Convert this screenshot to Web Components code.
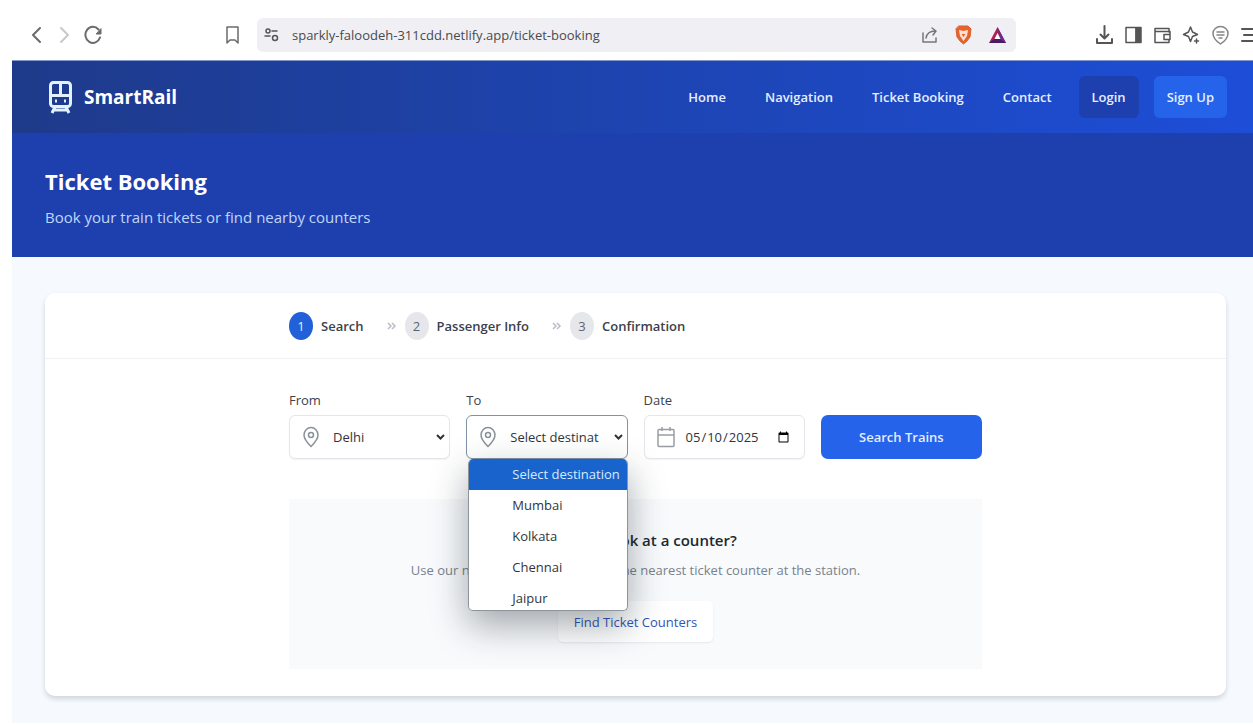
<!DOCTYPE html>
<html lang="en">
<head>
<meta charset="utf-8">
<meta name="viewport" content="width=device-width, initial-scale=1">
<title>SmartRail – Ticket Booking</title>
<style>
  body { margin: 0; background: #fff; color: #1f2937; font: 13px/20px "Open Sans", "Noto Sans", sans-serif; }
  main { display: block; margin-left: 12px; border-top: 1px solid #8497cc; background: #f6faff; }
</style>
</head>
<body>
<browser-bar></browser-bar>
<main>
  <site-header></site-header>
  <page-hero>
    <span slot="title">Ticket Booking</span>
    <span slot="lead">Book your train tickets or find nearby counters</span>
  </page-hero>
  <booking-card>
    <step-item slot="steps" number="1" current>Search</step-item>
    <step-item slot="steps" number="2">Passenger Info</step-item>
    <step-item slot="steps" number="3">Confirmation</step-item>
    <booking-form></booking-form>
    <counter-callout>
      <span slot="title">Prefer to book at a counter?</span>
      <span slot="text">Use our navigation system to find the nearest ticket counter at the station.</span>
      <span slot="action">Find Ticket Counters</span>
    </counter-callout>
  </booking-card>
</main>

<script>
const define = (name, html, setup) => customElements.define(name, class extends HTMLElement {
  connectedCallback() {
    if (this.shadowRoot) return;
    const t = document.createElement('template');
    t.innerHTML = '<style>:host,*{box-sizing:border-box}</style>' + html;
    this.attachShadow({ mode: 'open' }).append(t.content.cloneNode(true));
    if (setup) setup(this, this.shadowRoot);
  }
});

define('browser-bar', `
<style>
  :host { display: flex; align-items: center; height: 60px; padding: 18px 0 8px 26px; overflow: hidden; color: #6b6b6b; }
  button { flex: none; padding: 0; border: 0; background: none; color: inherit; display: grid; place-items: center; }
  svg { display: block; flex: none; fill: none; stroke: currentColor; stroke-width: 2; stroke-linecap: round; stroke-linejoin: round; }
  .nav { display: flex; gap: 10px; flex: none; width: 197px; }
  .nav button { width: 19px; height: 24px; }
  .dim { color: #c9c9c9; }
  .address { flex: 1; display: flex; align-items: center; gap: 15px; height: 34px; margin-left: 14px; padding: 0 9px 0 5px; border-radius: 6px; background: #f0eff4; color: #555; }
  input { flex: 1; min-width: 0; margin-left: -4px; padding: 0; border: 0; outline: 0; background: none; font: inherit; color: #4a4a4e; }
  .tools { display: flex; gap: 10px; margin-left: 79px; margin-right: -6px; color: #555; }
  .tools svg, .address svg { width: 19px; height: 20px; }
</style>
<div class="nav">
  <button aria-label="Back"><svg width="16" height="20" viewBox="0 0 16 20"><path d="M12 3 5 10l7 7"/></svg></button>
  <button class="dim" aria-label="Forward"><svg width="16" height="20" viewBox="0 0 16 20"><path d="m4 3 7 7-7 7"/></svg></button>
  <button aria-label="Reload"><svg width="19" height="20" viewBox="0 0 19 20"><path d="M16 12.500A7.500 8 0 1 1 14.500 4.500"/><path d="M17 4v5h-4.500z" fill="currentColor" stroke-width="1"/></svg></button>
</div>
<button aria-label="Bookmark"><svg width="20" height="22" viewBox="0 0 20 22"><path d="M4 3h11v16l-3-3H7l-3 3z" stroke-width="1.500"/></svg></button>
<div class="address">
  <svg viewBox="0 0 19 20"><g stroke-width="1.500"><circle cx="6" cy="6" r="2"/><path d="M10 6h5"/><circle cx="13" cy="13" r="2.500"/><path d="M3 11h5"/></g></svg>
  <input aria-label="Address" value="sparkly-faloodeh-311cdd.netlify.app/ticket-booking">
  <svg viewBox="0 0 19 20" style="color:#777"><g stroke-width="1.500"><path d="M3 8v9h13v-4M6 13c1-5 4-7 9-7M12 3l4 3-3 4"/></g></svg>
  <svg viewBox="0 0 19 20"><path d="M5 1h9l3 3-1 8-3 4-3.500 3L6 16l-3-4-1-8z" fill="#e8622d" stroke="#d9602e" stroke-width="1"/><path d="m5 5 4.500 1L14 5l-1 6-3.500 5L6 11z" fill="#fde3d3" stroke="none"/><path d="m7.500 9 2 3 2-3z" fill="#e8622d" stroke="none"/></svg>
  <svg viewBox="0 0 19 20"><path d="M9.500 2 18 18H1z" fill="#b01f4f" stroke="none"/><path d="M9.500 2 18 18l-6-4z" fill="#662d91" stroke="none"/><path d="m1 18 5-4h6l6 4z" fill="#4b1b66" stroke="none"/><path d="m9.500 8 3 6h-6z" fill="#fff" stroke="none"/></svg>
</div>
<div class="tools">
  <button aria-label="Downloads"><svg viewBox="0 0 19 20"><path d="M9.500 1v12M5.500 9.500l4 4 4-4M2 14v4h15v-4"/></svg></button>
  <button aria-label="Sidebar"><svg viewBox="0 0 19 20"><path d="M2 2.500h15v15H2z" stroke-width="1.500"/><path d="M12 3h4.500v14H12z" fill="currentColor" stroke-width="1"/></svg></button>
  <button aria-label="Wallet"><svg viewBox="0 0 19 20"><g stroke-width="1.500"><path d="M16 7V3.500H2v14h14v-3M2 6.500h15v8h-6v-5h6"/></g></svg></button>
  <button aria-label="Assistant"><svg viewBox="0 0 19 20"><g stroke-width="1.500"><path d="m8.500 2 2 5 5 2.500-5 2-2 5-2-5-5-2 5-2.500z"/><path d="M14.500 14v4M12.500 16h4"/></g></svg></button>
  <button aria-label="Profile" style="color:#858585"><svg viewBox="0 0 19 20"><g stroke-width="1.500"><path d="M9.500 19C5 16 2 13 2 8.500a7.500 7 0 0 1 15 0C17 13 14 16 9.500 19z"/><path d="M6 7h7M6 10h7M8 13h3"/></g></svg></button>
  <button aria-label="Menu"><svg viewBox="0 0 19 20"><path d="M2 4h14M4 10h12M2 16h14"/></svg></button>
</div>`);

define('site-header', `
<style>
  :host { display: flex; align-items: center; justify-content: space-between; height: 72px; padding: 0 26px 0 36px; color: #fff; background: linear-gradient(90deg, #1e3a8a, #1d4ed8); }
  a { color: inherit; text-decoration: none; }
  .brand { display: flex; align-items: center; gap: 11px; font-size: 19px; font-weight: 700; line-height: 28px; }
  nav { display: flex; align-items: center; gap: 15px; font-weight: 600; }
  nav a { padding: 0 12px; color: #e6eeff; white-space: nowrap; }
  nav .button { padding: 11px 13px; border-radius: 6px; }
  .login { background: #1e40af; }
  .signup { background: #2563eb; }
</style>
<a class="brand" href="#home">
  <svg width="25" height="34" viewBox="0 0 25 34" fill="none" stroke="#e3f1ff" stroke-width="3"><rect x="2.500" y="2.500" width="20" height="24" rx="3"/><path d="M12.500 3v12M2 15.500h21M7 27l-3 6M18 27l3 6M5 30h15"/><path d="M7 21h2M16 21h2"/></svg>
  SmartRail
</a>
<nav>
  <a href="#home">Home</a>
  <a href="#navigation">Navigation</a>
  <a href="#booking">Ticket Booking</a>
  <a href="#contact">Contact</a>
  <a class="button login" href="#login">Login</a>
  <a class="button signup" href="#signup">Sign Up</a>
</nav>`);

define('page-hero', `
<style>
  :host { display: block; padding: 32px 33px 30px; background: #1e40af; }
  h1 { margin: 0 0 10px; font-size: 22px; line-height: 32px; font-weight: 700; color: #fff; }
  p { margin: 0; font-size: 15px; line-height: 20px; color: #bfd6fc; }
</style>
<h1><slot name="title"></slot></h1>
<p><slot name="lead"></slot></p>`);

define('booking-card', `
<style>
  :host { display: block; padding: 36px 27px 27px 33px; }
  section { border-radius: 10px; background: #fff; box-shadow: 0 3px 5px rgba(60, 70, 80, .2); }
  .steps { border-bottom: 1px solid #eff1f4; }
  .wrap { max-width: 693px; margin: 0 auto; }
  .steps .wrap { display: flex; padding: 19px 0 18px; }
  .body { padding: 32px 0 27px; }
</style>
<section>
  <div class="steps"><div class="wrap"><slot name="steps"></slot></div></div>
  <div class="wrap body"><slot></slot></div>
</section>`);

define('step-item', `
<style>
  :host { display: flex; align-items: center; gap: 8px; font-weight: 600; color: #3b424d; }
  .dot { display: grid; place-items: center; width: 24px; height: 28px; border-radius: 50%; background: #e5e7eb; color: #5b6470; font-weight: 400; }
  :host([current]) .dot { background: #2160d8; color: #e6f0ff; }
  svg { margin: 0 8px 0 15px; }
  :host(:last-of-type) svg { display: none; }
</style>
<span class="dot"></span>
<span><slot></slot></span>
<svg width="10" height="10" viewBox="0 0 10 10" fill="none" stroke="#b9bec6" stroke-width="1.500"><path d="m1 2 3 3-3 3M5 2l3 3-3 3"/></svg>`,
(host, root) => { root.querySelector('.dot').textContent = host.getAttribute('number'); });

define('form-field', `
<style>
  :host { display: flex; flex-direction: column; gap: 6px; position: relative; min-width: 0; }
  .control { display: grid; grid-template-columns: minmax(0, 1fr); height: 44px; }
  .control > * { grid-area: 1 / 1; }
  .lead { z-index: 1; align-self: center; margin-left: 12px; pointer-events: none; justify-self: start; }
  ::slotted([slot=arrow]) { z-index: 1; pointer-events: none; align-self: center; justify-self: end; margin-right: 4px; }
</style>
<slot name="label"></slot>
<div class="control"><slot name="input"></slot><span class="lead"><slot name="icon"></slot></span><slot name="arrow"></slot></div>
<slot></slot>`);

const pin = `<svg slot="icon" width="20" height="22" viewBox="0 0 20 22" fill="none" stroke="#8b919b" stroke-width="1.500" style="display:block"><path d="M10 20.500C6 16.500 3 13 3 9a7 7.500 0 0 1 14 0c0 4-3 7.500-7 11.500z"/><circle cx="10" cy="9" r="2.500"/></svg>`;
const arrow = `<svg slot="arrow" width="11" height="8" viewBox="0 0 11 8" fill="none" stroke="#333" stroke-width="2" style="grid-area:1/1"><path d="m2 2 3.500 3.500L9 2"/></svg>`;

define('booking-form', `
<style>
  :host { display: block; }
  form { display: grid; grid-template-columns: repeat(4, minmax(0, 1fr)); gap: 16px; align-items: end; }
  label { line-height: 18px; color: #3b424d; }
  select, input { grid-area: 1 / 1; width: 100%; min-width: 0; height: 44px; margin: 0; border: 1px solid #e3e6ea; border-radius: 6px; background: #fff; color: #30353d; font: inherit; box-shadow: 0 1px 1px rgba(0, 0, 0, .05); }
  select { appearance: none; padding: 0 28px 0 43px; }
  #to { border-color: #7f93a8; }
  input { padding: 0 12px 0 40px; }
  form > button { height: 44px; padding: 0; border: 0; border-radius: 7px; background: #2563eb; color: #e4edff; font: inherit; font-weight: 600; }
</style>
<form>
  <form-field>
    <label slot="label" for="from">From</label>${pin}
    <select slot="input" id="from"><option>Delhi</option></select>${arrow}
  </form-field>
  <form-field>
    <label slot="label" for="to">To</label>${pin}
    <select slot="input" id="to"><option>Select destination</option><option>Mumbai</option><option>Kolkata</option><option>Chennai</option><option>Jaipur</option></select>${arrow}
    <option-menu></option-menu>
  </form-field>
  <form-field>
    <label slot="label" for="date">Date</label>
    <svg slot="icon" width="20" height="22" viewBox="0 0 20 22" fill="none" stroke="#999da3" stroke-width="1.500" style="display:block"><rect x="2" y="3.500" width="16" height="17" rx="1"/><path d="M2 9h16M6 1v4M14 1v4"/></svg>
    <input slot="input" id="date" type="date" value="2025-05-10">
  </form-field>
  <button type="button">Search Trains</button>
</form>`);

define('option-menu', `
<style>
  :host { position: absolute; top: 100%; left: 2px; right: 0; z-index: 5; height: 152px; overflow: hidden; border: 1px solid #8d959c; border-top: 0; border-radius: 5px; background: #fff; box-shadow: 0 14px 36px rgba(30, 40, 50, .4); color: #30353d; }
  ul { margin: 0; padding: 0; list-style: none; }
  li { padding: 3px 0 4px 43px; line-height: 24px; white-space: nowrap; }
  li[aria-selected] { background: #1864cc; color: #d8e9ff; }
</style>
<ul role="listbox" aria-label="Destination">
  <li role="option" aria-selected="true">Select destination</li>
  <li role="option">Mumbai</li>
  <li role="option">Kolkata</li>
  <li role="option">Chennai</li>
  <li role="option">Jaipur</li>
</ul>`);

define('counter-callout', `
<style>
  :host { display: flex; flex-direction: column; align-items: center; margin-top: 40px; padding: 29px 16px 27px; background: #f8fafc; text-align: center; }
  h2 { margin: 0 0 8px; font-size: 15px; line-height: 24px; font-weight: 600; color: #22272f; }
  p { margin: 0 0 21px; line-height: 20px; color: #7a818c; }
  button { height: 41px; padding: 0 16px; border: 0; border-radius: 5px; background: #fff; color: #2f56b8; font: inherit; font-weight: 500; box-shadow: 0 1px 2px rgba(0, 0, 0, .08); }
</style>
<h2><slot name="title"></slot></h2>
<p><slot name="text"></slot></p>
<button type="button"><slot name="action"></slot></button>`);
</script>
</body>
</html>
